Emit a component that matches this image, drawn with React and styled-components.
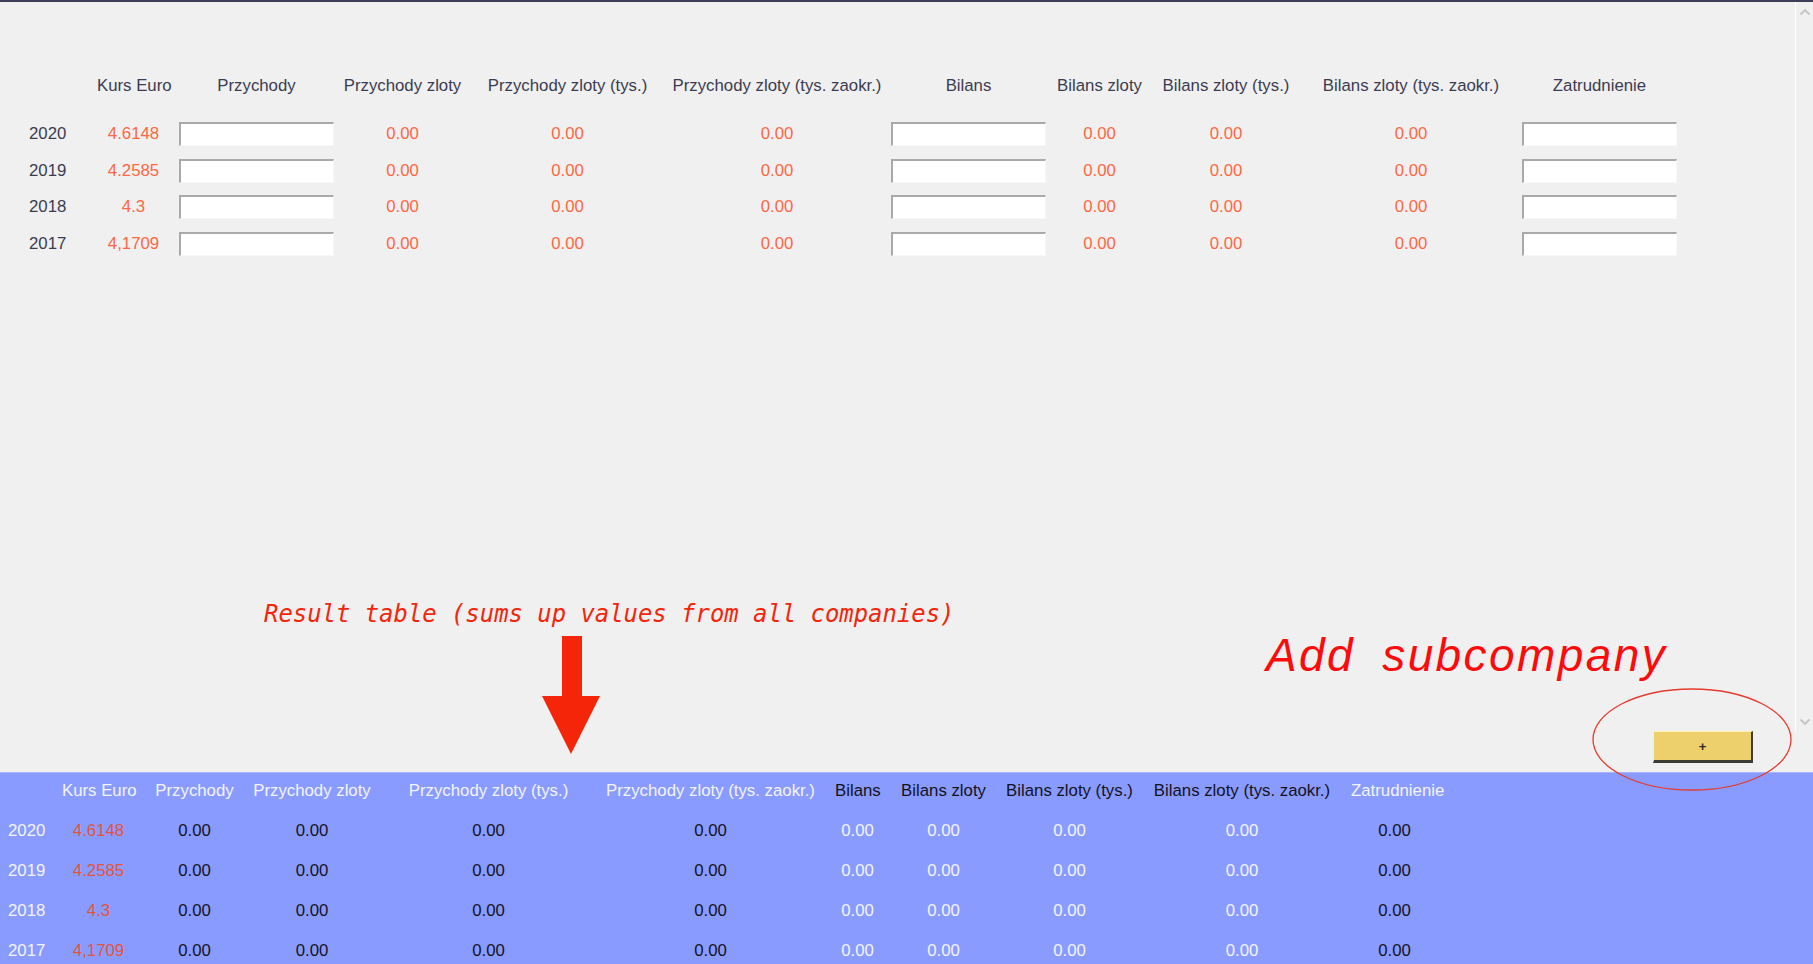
import React from "react";
import styled, { createGlobalStyle } from "styled-components";

const GlobalStyle = createGlobalStyle`
*{
  margin: 0;
  padding: 0;
  box-sizing: border-box;
}
html, body{
  height: 100%;
  overflow: hidden;
  background-color: #f0f0f0;
  font-family: "Liberation Sans", Arial, sans-serif;
  font-size: 16.8px;
}
`;

const YEARS = ["2020", "2019", "2018", "2017"];
const RATES = ["4.6148", "4.2585", "4.3", "4,1709"];

// content left edge + width, in px, as measured on the form
const TOP_COLS = [
  { label: "", left: 29, width: 36, kind: "year" },
  { label: "Kurs Euro", left: 97, width: 73, kind: "rate" },
  { label: "Przychody", left: 179, width: 155, kind: "input" },
  { label: "Przychody zloty", left: 343, width: 119, kind: "value" },
  { label: "Przychody zloty (tys.)", left: 487, width: 161, kind: "value" },
  { label: "Przychody zloty (tys. zaokr.)", left: 672, width: 210, kind: "value" },
  { label: "Bilans", left: 891, width: 155, kind: "input" },
  { label: "Bilans zloty", left: 1057, width: 85, kind: "value" },
  { label: "Bilans zloty (tys.)", left: 1162, width: 128, kind: "value" },
  { label: "Bilans zloty (tys. zaokr.)", left: 1322, width: 178, kind: "value" },
  { label: "Zatrudnienie", left: 1522, width: 155, kind: "input" },
];

const SUM_COLS = [
  { label: "", left: 8, width: 35, kind: "year", head: "light", cell: "light" },
  { label: "Kurs Euro", left: 62, width: 73, kind: "rate", head: "light", cell: "rate" },
  { label: "Przychody", left: 155, width: 79, head: "light", cell: "dark" },
  { label: "Przychody zloty", left: 253, width: 118, head: "light", cell: "dark" },
  { label: "Przychody zloty (tys.)", left: 408, width: 161, head: "light", cell: "dark" },
  { label: "Przychody zloty (tys. zaokr.)", left: 605, width: 211, head: "light", cell: "dark" },
  { label: "Bilans", left: 835, width: 45, head: "dark", cell: "light" },
  { label: "Bilans zloty", left: 901, width: 85, head: "dark", cell: "light" },
  { label: "Bilans zloty (tys.)", left: 1005, width: 129, head: "dark", cell: "light" },
  { label: "Bilans zloty (tys. zaokr.)", left: 1153, width: 178, head: "dark", cell: "light" },
  { label: "Zatrudnienie", left: 1351, width: 87, head: "light", cell: "dark" },
];

const TONES = {
  head: "#3b3c50",
  value: "#ff6743",
  light: "#f3f5ff",
  dark: "#12121c",
  rate: "#e2553a",
};

const gaps = (cols) =>
  cols.map((c, i) => c.left - (i ? cols[i - 1].left + cols[i - 1].width : 0));

const Root = styled.div`
  position: relative;
  height: 100vh;
  display: flex;
  flex-direction: column;
  border-top: 2px solid #3c3e56;
`;

const Pane = styled.div`
  height: 729px;
  flex: none;
  display: flex;
`;

const Content = styled.div`
  flex: 1;
  padding-top: 73px;
`;

const ScrollTrack = styled.div`
  width: 18px;
  flex: none;
  border-left: 1px solid #ffffff;
  display: flex;
  flex-direction: column;
  justify-content: space-between;
  align-items: center;
  padding: 6px 0 5px;
`;

const Row = styled.div`
  display: flex;
  align-items: center;
  height: ${(p) => p.$h}px;
  margin-bottom: ${(p) => p.$mb || 0}px;
`;

const Cell = styled.div`
  flex: none;
  width: ${(p) => p.$w}px;
  margin-left: ${(p) => p.$ml}px;
  text-align: center;
  white-space: nowrap;
  color: ${(p) => p.$color};
`;

const Field = styled.input`
  display: block;
  width: 155px;
  height: 24px;
  background: #ffffff;
  border-style: solid;
  border-width: 2px 1px 1px 2px;
  border-color: #a9a9a9 #f7f7f7 #f7f7f7 #a9a9a9;
  outline: none;
  font: inherit;
`;

const ButtonBar = styled.div`
  height: 41px;
  flex: none;
  display: flex;
  justify-content: flex-end;
  padding-right: 60px;
`;

const AddButton = styled.button`
  width: 100px;
  height: 32px;
  background: #edcf6b;
  border-style: solid;
  border-width: 1px 2px 3px 1px;
  border-color: #fff3ad #3c3c32 #3c3c32 #fff3ad;
  font-family: "Liberation Sans", Arial, sans-serif;
  font-size: 13px;
  font-weight: bold;
  color: #2c2c2c;
  cursor: pointer;
`;

const Summary = styled.div`
  flex: 1;
  background: #8a9bff;
  border-top: 1px solid #a9b5ff;
  padding-top: 6px;
  overflow: hidden;
`;

const Note = styled.div`
  position: absolute;
  left: 264px;
  top: 600px;
  font-family: "DejaVu Sans Mono", "Liberation Mono", monospace;
  font-style: italic;
  font-size: 23.9px;
  line-height: 24px;
  color: #f3260c;
  white-space: nowrap;
`;

const BigNote = styled.div`
  position: absolute;
  left: 1266px;
  top: 630px;
  font-family: "Liberation Sans", Arial, sans-serif;
  font-style: italic;
  font-size: 46px;
  line-height: 46px;
  letter-spacing: 2.4px;
  word-spacing: 12px;
  color: #ff0a0a;
  white-space: nowrap;
`;

const Overlay = styled.svg`
  position: absolute;
  left: ${(p) => p.$x}px;
  top: ${(p) => p.$y}px;
  overflow: visible;
  pointer-events: none;
`;

function Chevron({ up }) {
  return (
    <svg width="12" height="8" viewBox="0 0 12 8">
      <polyline
        points={up ? "1.5,6.5 6,2 10.5,6.5" : "1.5,1.5 6,6 10.5,1.5"}
        fill="none"
        stroke="#c4c4c4"
        strokeWidth="1.8"
      />
    </svg>
  );
}

function CompanyTable() {
  const ml = gaps(TOP_COLS);
  return (
    <div>
      <Row $h={21} $mb={20}>
        {TOP_COLS.map((c, i) => (
          <Cell key={i} $w={c.width} $ml={ml[i]} $color={TONES.head}>
            {c.label}
          </Cell>
        ))}
      </Row>
      {YEARS.map((year, r) => (
        <Row key={year} $h={36.5}>
          {TOP_COLS.map((c, i) => {
            if (c.kind === "input")
              return (
                <Cell key={i} $w={c.width} $ml={ml[i]}>
                  <Field type="text" />
                </Cell>
              );
            const text = c.kind === "year" ? year : c.kind === "rate" ? RATES[r] : "0.00";
            const color = c.kind === "year" ? TONES.head : TONES.value;
            return (
              <Cell key={i} $w={c.width} $ml={ml[i]} $color={color}>
                {text}
              </Cell>
            );
          })}
        </Row>
      ))}
    </div>
  );
}

function SummaryTable() {
  const ml = gaps(SUM_COLS);
  return (
    <Summary>
      <Row $h={24} $mb={8}>
        {SUM_COLS.map((c, i) => (
          <Cell key={i} $w={c.width} $ml={ml[i]} $color={TONES[c.head]}>
            {c.label}
          </Cell>
        ))}
      </Row>
      {YEARS.map((year, r) => (
        <Row key={year} $h={40}>
          {SUM_COLS.map((c, i) => {
            const text = c.kind === "year" ? year : c.kind === "rate" ? RATES[r] : "0.00";
            return (
              <Cell key={i} $w={c.width} $ml={ml[i]} $color={TONES[c.cell]}>
                {text}
              </Cell>
            );
          })}
        </Row>
      ))}
    </Summary>
  );
}

export default function App() {
  return (
    <Root>
      <GlobalStyle />
      <Pane>
        <Content>
          <CompanyTable />
        </Content>
        <ScrollTrack>
          <Chevron up />
          <Chevron />
        </ScrollTrack>
      </Pane>
      <ButtonBar>
        <AddButton>+</AddButton>
      </ButtonBar>
      <SummaryTable />

      <Note>Result table (sums up values from all companies)</Note>
      <Overlay $x={542} $y={634} width="58" height="118" viewBox="0 0 58 118">
        <rect x="20" y="0" width="20" height="60" fill="#f5250a" />
        <polygon points="0,60 58,60 29,118" fill="#f5250a" />
      </Overlay>
      <BigNote>Add subcompany</BigNote>
      <Overlay $x={1592} $y={686} width="200" height="104" viewBox="0 0 200 104">
        <ellipse cx="100" cy="51.5" rx="99" ry="50.5" fill="none" stroke="#e63a2c" strokeWidth="1.3" />
      </Overlay>
    </Root>
  );
}
